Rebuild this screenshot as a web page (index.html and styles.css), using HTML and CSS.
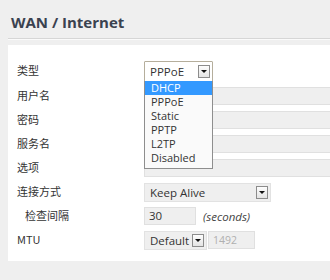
FILE: index.html
```html
<!DOCTYPE html>
<html>
<head>
<meta charset="utf-8">
<link rel="stylesheet" href="styles.css">
</head>
<body>
<div class="header"><h1 class="title">WAN / Internet</h1></div>
<div class="panel">
  <div class="row first">
    <span class="label">类型</span>
    <div class="ctl">
      <div class="select sel-type"><span class="val">PPPoE</span><span class="arrow"></span></div>
      <ul class="menu">
        <li class="active">DHCP</li>
        <li>PPPoE</li>
        <li>Static</li>
        <li>PPTP</li>
        <li>L2TP</li>
        <li>Disabled</li>
      </ul>
    </div>
  </div>
  <div class="row"><span class="label">用户名</span><div class="ctl"><div class="field wide"></div></div></div>
  <div class="row"><span class="label">密码</span><div class="ctl"><div class="field wide"></div></div></div>
  <div class="row"><span class="label">服务名</span><div class="ctl"><div class="field wide"></div></div></div>
  <div class="row"><span class="label">选项</span><div class="ctl"><div class="field wide"></div></div></div>
  <div class="row"><span class="label">连接方式</span><div class="ctl"><div class="select grey sel-keep"><span class="val">Keep Alive</span><span class="arrow"></span></div></div></div>
  <div class="row"><span class="label indent">检查间隔</span><div class="ctl"><div class="field sm">30</div><span class="unit">(seconds)</span></div></div>
  <div class="row"><span class="label">MTU</span><div class="ctl"><div class="select grey sel-mtu"><span class="val">Default</span><span class="arrow"></span></div><div class="field mtu">1492</div></div></div>
</div>
</body>
</html>
```
FILE: styles.css
```css
html, body {
  margin: 0;
  padding: 0;
  background: #efefef;
  font-family: "Open Sans", "Noto Sans CJK SC", sans-serif;
  color: #333;
  overflow: hidden;
}
.header {
  margin: 0 0 0 8px;
  padding: 13px 0 6px 3px;
  border-bottom: 1px solid #d6d6d6;
  box-shadow: 0 1px 0 #fafafa;
}
.title {
  margin: 0;
  font-size: 15px;
  line-height: 19px;
  font-weight: 700;
  color: #3a4250;
}
.panel {
  margin: 6px 0 0 8px;
  background: #fff;
  padding: 13px 0 11px 9px;
  height: 192px;
}
.row {
  display: flex;
  align-items: center;
  height: 24px;
}
.row.first {
  height: 26px;
  position: relative;
  z-index: 2;
}
.label {
  width: 127px;
  font-family: "Noto Sans CJK SC", sans-serif;
  font-size: 11px;
  line-height: 14px;
  margin-top: -3px;
  color: #333;
  flex: none;
}
.label.indent {
  padding-left: 8px;
  width: 119px;
}
.ctl {
  flex: 1;
  display: flex;
  align-items: center;
  position: relative;
  height: 100%;
}
.field {
  height: 18px;
  box-sizing: border-box;
  background: #efefef;
  border: 1px solid #e0e0e0;
  font-size: 11.5px;
  line-height: 16px;
  padding-left: 4px;
  color: #333;
}
.field.wide { flex: 1; border-right: none; }
.field.sm { width: 52px; }
.field.mtu { width: 47px; margin-left: 1px; color: #b0b0b0; font-size: 10.5px; }
.unit {
  margin-left: 7px;
  font-style: italic;
  font-size: 11.5px;
  color: #444;
}
.select {
  box-sizing: border-box;
  display: flex;
  align-items: center;
  justify-content: space-between;
  height: 21px;
  padding: 0 2px 0 5px;
  font-size: 11.5px;
  color: #333;
}
.sel-type {
  width: 69px;
  background: #fff;
  border: 1px solid #b5ae9c;
  border-radius: 1px;
}
.select.grey {
  height: 19px;
  background: #efefef;
  border: 1px solid #e2e2e2;
}
.sel-keep { width: 127px; }
.sel-mtu { width: 63px; }
.arrow {
  width: 12px;
  height: 13px;
  box-sizing: border-box;
  border: 1px solid #8c8c8c;
  background: linear-gradient(#fdfdfd, #e4e4e4);
  position: relative;
  flex: none;
}
.arrow::after {
  content: "";
  position: absolute;
  left: 2px;
  top: 4px;
  border-left: 3px solid transparent;
  border-right: 3px solid transparent;
  border-top: 3px solid #111;
}
.menu {
  position: absolute;
  left: 0;
  top: 23px;
  width: 69px;
  box-sizing: border-box;
  margin: 0;
  padding: 0 0 3px 0;
  list-style: none;
  background: #fafafa;
  border: 1px solid #8e8e8e;
  border-top: none;
  font-size: 11px;
  line-height: 14px;
}
.menu li {
  padding-left: 6px;
  color: #333;
}
.menu li.active {
  background: #3399ff;
  color: #fff;
}
```
